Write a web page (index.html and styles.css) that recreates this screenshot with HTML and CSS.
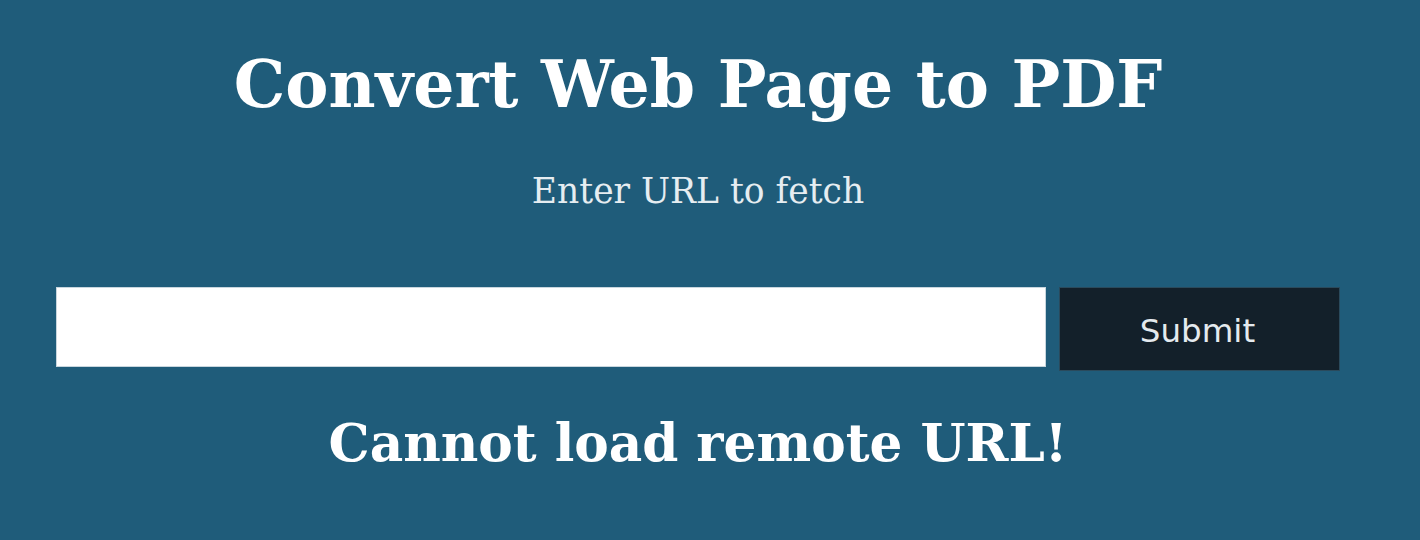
FILE: index.html
```html
<!DOCTYPE html>
<html>
<head>
<meta charset="utf-8">
<link rel="stylesheet" href="styles.css">
</head>
<body>
<main class="page">
  <h1 class="title">Convert Web Page to PDF</h1>
  <p class="subtitle">Enter URL to fetch</p>
  <form class="fetch-form">
    <input class="url-input" type="text">
    <button class="submit-btn" type="button">Submit</button>
  </form>
  <h2 class="error">Cannot load remote URL!</h2>
</main>
</body>
</html>
```
FILE: styles.css
```css
html, body {
  margin: 0;
  padding: 0;
  background: #1f5c7a;
  height: 100%;
}
.page {
  width: 1284px;
  margin-left: 56px;
  padding-top: 46px;
  display: flex;
  flex-direction: column;
  align-items: stretch;
  font-family: "DejaVu Serif", serif;
  color: #ffffff;
}
.title {
  margin: 0;
  font-size: 64.8px;
  line-height: 76px;
  font-weight: bold;
  text-align: center;
}
.subtitle {
  margin: 49px 0 0;
  font-size: 34.5px;
  line-height: 40px;
  text-align: center;
  color: #e6edf1;
}
.fetch-form {
  margin: 76px 0 0;
  display: flex;
  align-items: flex-start;
  gap: 13px;
}
.url-input {
  flex: 0 0 990px;
  height: 80px;
  box-sizing: border-box;
  border: 1px solid #c8d6de;
  background: #ffffff;
  margin: 0;
  padding: 0 16px;
  font-size: 32px;
  outline: none;
}
.submit-btn {
  flex: 1 1 auto;
  height: 84px;
  box-sizing: border-box;
  margin: 0;
  border: 1px solid #2a4a5c;
  background: #13202a;
  color: #e4eaee;
  font-family: "DejaVu Sans", sans-serif;
  font-size: 32.5px;
  padding: 4px 4px 0 0;
}
.error {
  margin: 42px 0 0;
  font-size: 51.7px;
  line-height: 60px;
  font-weight: bold;
  text-align: center;
}
```
